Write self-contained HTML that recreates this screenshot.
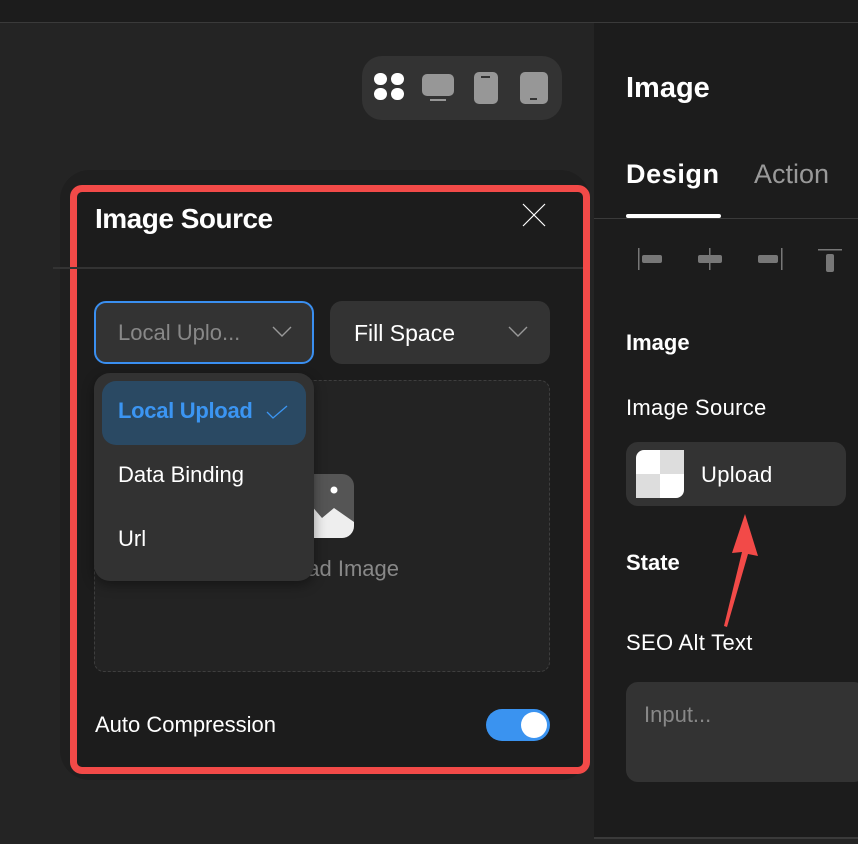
<!DOCTYPE html>
<html><head><meta charset="utf-8"><style>
*{margin:0;padding:0;box-sizing:border-box}
body{width:858px;height:844px;background:#242424;font-family:"Liberation Sans",sans-serif;position:relative;overflow:hidden;color:#fff}
.a{position:absolute}
</style></head><body>
<div class="a" style="left:0;top:0;width:858px;height:23px;background:#1c1c1c;border-bottom:1px solid #3a3a3a"></div>
<div class="a" style="left:362px;top:56px;width:200px;height:64px;border-radius:20px;background:#333"></div>
<svg class="a" style="left:362px;top:56px" width="200" height="64">
<rect x="12" y="17" width="13" height="12" rx="6" fill="#fff"/><rect x="29" y="17" width="13" height="12" rx="6" fill="#fff"/>
<rect x="12" y="32" width="13" height="12" rx="6" fill="#fff"/><rect x="29" y="32" width="13" height="12" rx="6" fill="#fff"/>
<rect x="60" y="18" width="32" height="22" rx="5" fill="#979797"/><rect x="68" y="43" width="16" height="2" fill="#979797"/>
<rect x="112" y="16" width="24" height="32" rx="5" fill="#979797"/><rect x="119" y="20" width="9" height="2" fill="#333"/>
<rect x="158" y="16" width="28" height="32" rx="5" fill="#979797"/><rect x="168" y="42" width="7" height="2" fill="#333"/>
</svg>
<div class="a" style="left:60px;top:170px;width:530px;height:610px;border-radius:30px;background:#1f1f1f"></div>
<div class="a" style="left:70px;top:185px;width:520px;height:589px;border:7px solid #f24a48;border-radius:12px;background:#1c1c1c"></div>
<div class="a" style="left:95px;top:203px;font-size:28px;font-weight:bold;letter-spacing:-0.5px">Image Source</div>
<svg class="a" style="left:521px;top:202px" width="26" height="26"><path d="M2 2L24 24M24 2L2 24" stroke="#fff" stroke-width="1.2"/></svg>
<div class="a" style="left:53px;top:267px;width:530px;height:2px;background:#333"></div>
<div class="a" style="left:94px;top:301px;width:220px;height:63px;border:2px solid #3a8ff0;border-radius:12px;background:#333"></div>
<div class="a" style="left:118px;top:320px;font-size:22px;color:#888">Local Uplo...</div>
<svg class="a" style="left:272px;top:326px" width="20" height="12"><path d="M1 1L10 10L19 1" stroke="#999" stroke-width="1.4" fill="none"/></svg>
<div class="a" style="left:330px;top:301px;width:220px;height:63px;border-radius:12px;background:#333"></div>
<div class="a" style="left:354px;top:320px;font-size:23px">Fill Space</div>
<svg class="a" style="left:508px;top:326px" width="20" height="12"><path d="M1 1L10 10L19 1" stroke="#999" stroke-width="1.4" fill="none"/></svg>
<div class="a" style="left:94px;top:380px;width:456px;height:292px;border:1.5px dashed #3e3e3e;border-radius:10px;background:#232323"></div>
<svg class="a" style="left:290px;top:474px" width="66" height="66"><rect x="0" y="0" width="64" height="64" rx="12" fill="#555"/><circle cx="44" cy="16" r="3.5" fill="#fff"/><path d="M0 52L20 30L32 44L44 34L64 48V52A12 12 0 0 1 52 64H12A12 12 0 0 1 0 52Z" fill="#eee"/></svg>
<div class="a" style="left:262px;top:556px;font-size:22px;color:#888">Upload Image</div>
<div class="a" style="left:94px;top:373px;width:220px;height:208px;border-radius:16px;background:#323232;box-shadow:0 4px 12px rgba(0,0,0,.4)"></div>
<div class="a" style="left:102px;top:381px;width:204px;height:64px;border-radius:14px;background:#2a4963"></div>
<div class="a" style="left:118px;top:398px;font-size:22px;font-weight:bold;color:#3b95f2;letter-spacing:-0.3px">Local Upload</div>
<svg class="a" style="left:266px;top:405px" width="22" height="14"><path d="M1 7L7 13L21 1" stroke="#3b95f2" stroke-width="1.3" fill="none"/></svg>
<div class="a" style="left:118px;top:462px;font-size:22px">Data Binding</div>
<div class="a" style="left:118px;top:526px;font-size:22px">Url</div>
<div class="a" style="left:95px;top:712px;font-size:22px">Auto Compression</div>
<div class="a" style="left:486px;top:709px;width:64px;height:32px;border-radius:16px;background:#3a93f0"></div>
<div class="a" style="left:521px;top:712px;width:26px;height:26px;border-radius:13px;background:#fff"></div>
<div class="a" style="left:594px;top:23px;width:264px;height:816px;background:#1c1c1c;border-bottom:2px solid #3a3a3a"></div>
<div class="a" style="left:626px;top:72px;font-size:29px;font-weight:bold">Image</div>
<div class="a" style="left:626px;top:159px;font-size:27px;font-weight:bold;letter-spacing:0.6px">Design</div>
<div class="a" style="left:754px;top:159px;font-size:27px;color:#999">Action</div>
<div class="a" style="left:626px;top:214px;width:95px;height:4px;border-radius:2px;background:#fff"></div>
<div class="a" style="left:594px;top:218px;width:264px;height:1px;background:#3a3a3a"></div>
<svg class="a" style="left:630px;top:245px" width="228" height="30">
<rect x="8" y="3" width="1.5" height="22" fill="#777"/><rect x="12" y="10" width="20" height="8" rx="2" fill="#777"/>
<rect x="68" y="10" width="24" height="8" rx="2" fill="#777"/><rect x="79" y="3" width="1.5" height="22" fill="#777"/>
<rect x="128" y="10" width="20" height="8" rx="2" fill="#777"/><rect x="151" y="3" width="1.5" height="22" fill="#777"/>
<rect x="188" y="4" width="24" height="1.5" fill="#777"/><rect x="196" y="9" width="8" height="18" rx="2" fill="#777"/>
</svg>
<div class="a" style="left:626px;top:330px;font-size:22px;font-weight:bold">Image</div>
<div class="a" style="left:626px;top:395px;font-size:22px;letter-spacing:0.3px">Image Source</div>
<div class="a" style="left:626px;top:442px;width:220px;height:64px;border-radius:12px;background:#333"></div>
<svg class="a" style="left:636px;top:450px" width="48" height="48"><rect width="48" height="48" rx="8" fill="#fff"/><rect x="24" y="0" width="24" height="24" fill="#ddd"/><rect x="0" y="24" width="24" height="24" fill="#ddd"/></svg>
<div class="a" style="left:701px;top:462px;font-size:22px;letter-spacing:0.3px">Upload</div>
<div class="a" style="left:626px;top:550px;font-size:22px;font-weight:bold">State</div>
<div class="a" style="left:626px;top:630px;font-size:22px;letter-spacing:0.3px">SEO Alt Text</div>
<div class="a" style="left:626px;top:682px;width:240px;height:100px;border-radius:12px;background:#333"></div>
<div class="a" style="left:644px;top:702px;font-size:22px;color:#888">Input...</div>
<svg class="a" style="left:720px;top:510px" width="40" height="120"><path d="M25 4L38 46L28 44L7 117L4 116L22 42L12 43Z" fill="#f24a48"/></svg>
</body></html>
